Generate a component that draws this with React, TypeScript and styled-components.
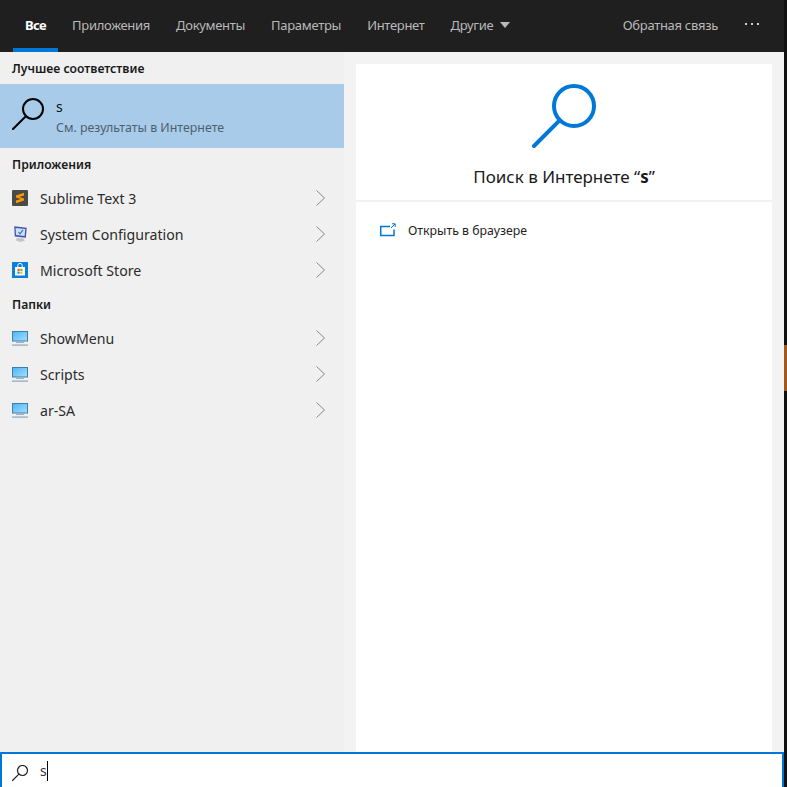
import React from "react";
import styled, { createGlobalStyle } from "styled-components";

const Global = createGlobalStyle`
  html, body { margin: 0; padding: 0; background: #111; }
  body { font-family: "Noto Sans", "Open Sans", sans-serif; }
  #root { width: 787px; height: 787px; overflow: hidden; }
`;

const Screen = styled.div`
  width: 787px;
  height: 787px;
  display: flex;
`;
const Window = styled.div`
  width: 784px;
  height: 787px;
  display: flex;
  flex-direction: column;
`;
const EdgeStrip = styled.div`
  width: 3px;
  display: flex;
  flex-direction: column;
  background: #111111;
  padding-top: 345px;
`;
const EdgeAccent = styled.div`
  height: 46px;
  background: #a0581e;
`;
const TopBar = styled.div`
  height: 52px;
  flex: none;
  display: flex;
  align-items: stretch;
  background: #1f1f1f;
  padding-left: 13px;
  gap: 2px;
`;
const Tab = styled.div<{ $active?: boolean }>`
  position: relative;
  display: flex;
  align-items: center;
  gap: 7px;
  padding: 0 12px 2px;
  font-size: 13px;
  letter-spacing: ${(p) => (p.$active ? "-0.6px" : "-0.3px")};
  font-weight: ${(p) => (p.$active ? 700 : 400)};
  color: ${(p) => (p.$active ? "#ffffff" : "#b9b9b9")};
  &::after {
    content: "";
    display: ${(p) => (p.$active ? "block" : "none")};
    position: absolute;
    left: 0;
    right: 0;
    bottom: 0;
    height: 4px;
    background: #0078d7;
  }
`;
const Caret = styled.span`
  width: 0;
  height: 0;
  border-left: 5.5px solid transparent;
  border-right: 5.5px solid transparent;
  border-top: 6px solid #b9b9b9;
`;
const Spacer = styled.div`
  flex: 1;
`;
const Feedback = styled(Tab)`
  padding-right: 0;
`;
const More = styled.div`
  display: flex;
  align-items: center;
  gap: 4px;
  margin: 0 25px 4px 25px;
`;
const Dot = styled.span`
  width: 2px;
  height: 2px;
  background: #cfcfcf;
`;
const Content = styled.div`
  flex: 1;
  min-height: 0;
  display: flex;
`;
const LeftPane = styled.div`
  width: 344px;
  flex: none;
  background: #f0f0f0;
  display: flex;
  flex-direction: column;
`;
const SectionTitle = styled.div`
  height: 32px;
  display: flex;
  align-items: center;
  padding-left: 12px;
  font-size: 12.2px;
  font-weight: 600;
  color: #1a1a1a;
`;
const BestRow = styled.div`
  height: 64px;
  display: flex;
  align-items: center;
  background: #a8cbe9;
  padding-left: 12px;
`;
const BestIcon = styled.div`
  display: flex;
  margin-bottom: 4px;
`;
const BestText = styled.div`
  margin-left: 12px;
  display: flex;
  flex-direction: column;
  gap: 3px;
  padding-top: 3px;
`;
const BestTitle = styled.div`
  font-size: 14px;
  line-height: 18px;
  color: #111;
`;
const BestSub = styled.div`
  font-size: 12.4px;
  line-height: 18px;
  color: #4d5f6e;
`;
const Row = styled.div`
  height: 36px;
  display: flex;
  align-items: center;
  padding-left: 12px;
  padding-right: 17px;
`;
const RowIcon = styled.svg`
  width: 16px;
  height: 16px;
  flex: none;
`;
const RowLabel = styled.div`
  flex: 1;
  margin-left: 12px;
  font-size: 14.15px;
  color: #2b2b2b;
`;
const Chevron = styled.svg`
  width: 12px;
  height: 18px;
  flex: none;
`;
const RightPane = styled.div`
  flex: 1;
  background: #f3f3f3;
  padding: 12px 12px 0;
  display: flex;
`;
const Card = styled.div`
  flex: 1;
  background: #ffffff;
  display: flex;
  flex-direction: column;
`;
const Hero = styled.div`
  height: 138px;
  flex: none;
  display: flex;
  flex-direction: column;
  align-items: center;
  padding-top: 20px;
  box-sizing: border-box;
  border-bottom: 2px solid #f2f2f2;
`;
const HeroTitle = styled.div`
  margin-top: 17px;
  font-size: 17px;
  line-height: 24px;
  color: #1a1a1a;
  b { font-weight: 700; }
`;
const Action = styled.div`
  display: flex;
  align-items: center;
  height: 56px;
  padding-left: 24px;
  font-size: 12.3px;
  color: #222;
`;
const ActionLabel = styled.span`
  margin-left: 12px;
`;
const SearchBox = styled.div`
  height: 35px;
  flex: none;
  box-sizing: border-box;
  background: #fff;
  border: 2px solid #0078d7;
  border-bottom: 0;
  display: flex;
  align-items: center;
  padding-left: 10px;
`;
const SearchIcon = styled.div`
  display: flex;
  margin-top: 5px;
`;
const Typed = styled.span`
  margin-left: 12px;
  font-size: 14px;
  color: #333;
`;
const Cursor = styled.span`
  width: 1px;
  height: 20px;
  background: #000;
`;

function SublimeIcon() {
  return (
    <RowIcon viewBox="0 0 16 16">
      <rect width="16" height="16" rx="1" fill="#4a4a48" />
      <path d="M4 5.4 12 2.8V5.4L7.2 7 12 8.4V10.6L4 13.2V10.6L8.8 9 4 7.6Z" fill="#ff9800" />
    </RowIcon>
  );
}
function SysConfigIcon() {
  return (
    <RowIcon viewBox="0 0 16 16">
      <path d="M4.5 12 11 12.3 13 14.5 9 16 4 14.5Z" fill="#c4c4c4" />
      <path d="M2.2 .3 14.7 1.8 13.8 11.7 2.8 10.4Z" fill="#3f51ad" />
      <path d="M3.6 1.9 13.3 3 12.6 10.1 4 9.1Z" fill="#c9e0f6" />
      <path d="M6.5 6 8 7.8 11 3.8" stroke="#2d6fc0" strokeWidth="1.1" fill="none" />
    </RowIcon>
  );
}
function StoreIcon() {
  return (
    <RowIcon viewBox="0 0 16 16">
      <rect width="16" height="16" fill="#0a7fdc" />
      <path d="M3 5h10v8.5H3Z" fill="#fff" />
      <path d="M5.8 5V3.5a2.2 2.2 0 0 1 4.4 0V5" stroke="#fff" strokeWidth="1" fill="none" />
      <rect x="5.5" y="6.8" width="2.2" height="2.2" fill="#f25022" />
      <rect x="8.3" y="6.8" width="2.2" height="2.2" fill="#7fba00" />
      <rect x="5.5" y="9.6" width="2.2" height="2.2" fill="#00a4ef" />
      <rect x="8.3" y="9.6" width="2.2" height="2.2" fill="#ffb900" />
    </RowIcon>
  );
}
function PcIcon() {
  return (
    <RowIcon viewBox="0 0 16 16">
      <defs>
        <linearGradient id="pcScreen" x1="0" y1="0" x2="1" y2="1">
          <stop offset="0" stopColor="#4db4f5" />
          <stop offset="1" stopColor="#a5e0ff" />
        </linearGradient>
      </defs>
      <rect x="0.5" y="1.5" width="15" height="9.5" fill="url(#pcScreen)" stroke="#3f7fa8" />
      <rect x="6.5" y="11.5" width="3" height="1" fill="#9fb6c6" />
      <rect x="4" y="12" width="8" height="1" fill="#9db1c0" />
      <rect y="14.3" width="16" height="1.7" fill="#a9bac8" />
    </RowIcon>
  );
}
function ChevronIcon() {
  return (
    <Chevron viewBox="0 0 12 18">
      <path d="M1.5 1.5 9.5 9 1.5 16.5" fill="none" stroke="#8a8a8a" strokeWidth="1" />
    </Chevron>
  );
}
function Magnifier({ size, color, width }: { size: number; color: string; width: number }) {
  return (
    <svg width={size} height={size} viewBox="0 0 32 32" style={{ flex: "none" }}>
      <circle cx="21" cy="11" r="10" fill="none" stroke={color} strokeWidth={width} />
      <path d="M13.8 18.2 1 31" fill="none" stroke={color} strokeWidth={width} strokeLinecap="round" />
    </svg>
  );
}

const apps = [
  { name: "Sublime Text 3", Icon: SublimeIcon },
  { name: "System Configuration", Icon: SysConfigIcon },
  { name: "Microsoft Store", Icon: StoreIcon },
];
const folders = ["ShowMenu", "Scripts", "ar-SA"];
const tabs = ["Приложения", "Документы", "Параметры", "Интернет"];

export default function App() {
  return (
    <Screen>
      <Global />
      <Window>
        <TopBar>
          <Tab $active>Все</Tab>
          {tabs.map((t) => (
            <Tab key={t}>{t}</Tab>
          ))}
          <Tab>
            Другие
            <Caret />
          </Tab>
          <Spacer />
          <Feedback>Обратная связь</Feedback>
          <More>
            <Dot />
            <Dot />
            <Dot />
          </More>
        </TopBar>
        <Content>
          <LeftPane>
            <SectionTitle>Лучшее соответствие</SectionTitle>
            <BestRow>
              <BestIcon>
                <Magnifier size={32} color="#000" width={2} />
              </BestIcon>
              <BestText>
                <BestTitle>s</BestTitle>
                <BestSub>См. результаты в Интернете</BestSub>
              </BestText>
            </BestRow>
            <SectionTitle>Приложения</SectionTitle>
            {apps.map(({ name, Icon }) => (
              <Row key={name}>
                <Icon />
                <RowLabel>{name}</RowLabel>
                <ChevronIcon />
              </Row>
            ))}
            <SectionTitle>Папки</SectionTitle>
            {folders.map((f) => (
              <Row key={f}>
                <PcIcon />
                <RowLabel>{f}</RowLabel>
                <ChevronIcon />
              </Row>
            ))}
          </LeftPane>
          <RightPane>
            <Card>
              <Hero>
                <Magnifier size={64} color="#0078d7" width={2} />
                <HeroTitle>
                  Поиск в Интернете “<b>s</b>”
                </HeroTitle>
              </Hero>
              <Action>
                <svg width="16" height="14" viewBox="0 0 16 14">
                  <path d="M10 3.5H.75V12.5H14V6.5" fill="none" stroke="#0078d7" strokeWidth="1.5" />
                  <path d="M11 5 15 1M12 .8H15.2V4" fill="none" stroke="#0078d7" strokeWidth="1" />
                </svg>
                <ActionLabel>Открыть в браузере</ActionLabel>
              </Action>
            </Card>
          </RightPane>
        </Content>
        <SearchBox>
          <SearchIcon>
            <Magnifier size={16} color="#222" width={2.4} />
          </SearchIcon>
          <Typed>s</Typed>
          <Cursor />
        </SearchBox>
      </Window>
      <EdgeStrip>
        <EdgeAccent />
      </EdgeStrip>
    </Screen>
  );
}
